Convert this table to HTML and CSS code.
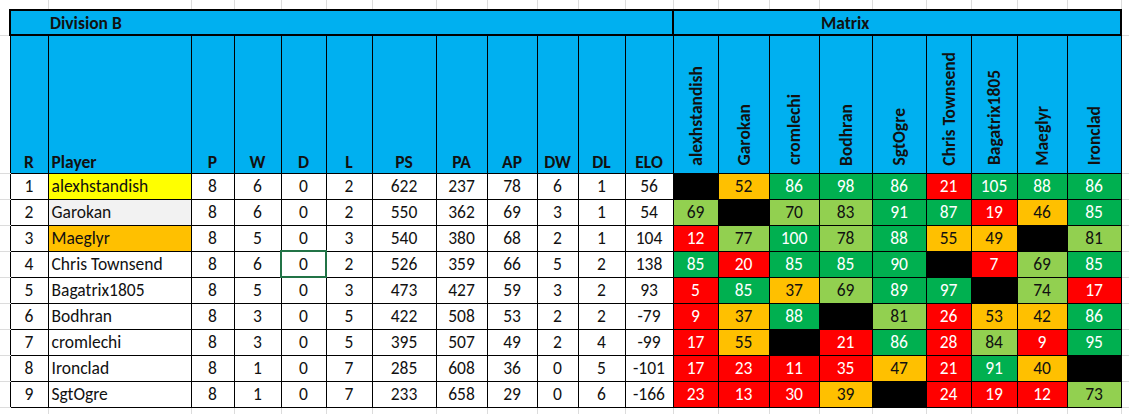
FILE: index.html
```html
<!DOCTYPE html>
<html lang="en">
<head>
<meta charset="utf-8">
<title>Division B</title>
<link rel="stylesheet" href="styles.css">
</head>
<body>
<table class="sheet">
  <colgroup>
    <col class="c-gap-l">
    <col class="c-r"><col class="c-player"><col class="c-p"><col class="c-w"><col class="c-d"><col class="c-l">
    <col class="c-ps"><col class="c-pa"><col class="c-ap"><col class="c-dw"><col class="c-dl"><col class="c-elo">
    <col class="c-m1"><col class="c-m2"><col class="c-m3"><col class="c-m4"><col class="c-m5"><col class="c-m6"><col class="c-m7"><col class="c-m8"><col class="c-m9">
    <col class="c-gap-r">
  </colgroup>
  <tbody>
    <tr class="gap-top">
      <td class="gl"></td>
      <td></td><td></td><td></td><td></td><td></td><td></td><td></td><td></td><td></td><td></td><td></td><td></td>
      <td></td><td></td><td></td><td></td><td></td><td></td><td></td><td></td><td></td>
      <td class="gr"></td>
    </tr>
    <tr class="title-row">
      <td class="gl"></td>
      <td class="title title-div" colspan="12">Division B</td>
      <td class="title title-matrix" colspan="9">Matrix</td>
      <td class="gr"></td>
    </tr>
    <tr class="head-row">
      <td class="gl"></td>
      <th>R</th><th class="left">Player</th><th>P</th><th>W</th><th>D</th><th>L</th>
      <th>PS</th><th>PA</th><th>AP</th><th>DW</th><th>DL</th><th>ELO</th>
      <th><span class="vert">alexhstandish</span></th>
      <th><span class="vert">Garokan</span></th>
      <th><span class="vert">cromlechi</span></th>
      <th><span class="vert">Bodhran</span></th>
      <th><span class="vert">SgtOgre</span></th>
      <th><span class="vert">Chris Townsend</span></th>
      <th><span class="vert">Bagatrix1805</span></th>
      <th><span class="vert">Maeglyr</span></th>
      <th><span class="vert">Ironclad</span></th>
      <td class="gr"></td>
    </tr>
    <tr class="row">
      <td class="gl"></td>
      <td>1</td><td class="left hl-y">alexhstandish</td><td>8</td><td>6</td><td>0</td><td>2</td>
      <td>622</td><td>237</td><td>78</td><td>6</td><td>1</td><td>56</td>
      <td class="x"></td><td class="o">52</td><td class="g">86</td><td class="g">98</td><td class="g">86</td><td class="r">21</td><td class="g">105</td><td class="g">88</td><td class="g">86</td>
      <td class="gr"></td>
    </tr>
    <tr class="row">
      <td class="gl"></td>
      <td>2</td><td class="left hl-gray">Garokan</td><td>8</td><td>6</td><td>0</td><td>2</td>
      <td>550</td><td>362</td><td>69</td><td>3</td><td>1</td><td>54</td>
      <td class="lg">69</td><td class="x"></td><td class="lg">70</td><td class="lg">83</td><td class="g">91</td><td class="g">87</td><td class="r">19</td><td class="o">46</td><td class="g">85</td>
      <td class="gr"></td>
    </tr>
    <tr class="row">
      <td class="gl"></td>
      <td>3</td><td class="left hl-o">Maeglyr</td><td>8</td><td>5</td><td>0</td><td>3</td>
      <td>540</td><td>380</td><td>68</td><td>2</td><td>1</td><td>104</td>
      <td class="r">12</td><td class="lg">77</td><td class="g">100</td><td class="lg">78</td><td class="g">88</td><td class="o">55</td><td class="o">49</td><td class="x"></td><td class="lg">81</td>
      <td class="gr"></td>
    </tr>
    <tr class="row">
      <td class="gl"></td>
      <td>4</td><td class="left">Chris Townsend</td><td>8</td><td>6</td><td class="selected">0</td><td>2</td>
      <td>526</td><td>359</td><td>66</td><td>5</td><td>2</td><td>138</td>
      <td class="g">85</td><td class="r">20</td><td class="g">85</td><td class="g">85</td><td class="g">90</td><td class="x"></td><td class="r">7</td><td class="lg">69</td><td class="g">85</td>
      <td class="gr"></td>
    </tr>
    <tr class="row">
      <td class="gl"></td>
      <td>5</td><td class="left">Bagatrix1805</td><td>8</td><td>5</td><td>0</td><td>3</td>
      <td>473</td><td>427</td><td>59</td><td>3</td><td>2</td><td>93</td>
      <td class="r">5</td><td class="g">85</td><td class="o">37</td><td class="lg">69</td><td class="g">89</td><td class="g">97</td><td class="x"></td><td class="lg">74</td><td class="r">17</td>
      <td class="gr"></td>
    </tr>
    <tr class="row">
      <td class="gl"></td>
      <td>6</td><td class="left">Bodhran</td><td>8</td><td>3</td><td>0</td><td>5</td>
      <td>422</td><td>508</td><td>53</td><td>2</td><td>2</td><td>-79</td>
      <td class="r">9</td><td class="o">37</td><td class="g">88</td><td class="x"></td><td class="lg">81</td><td class="r">26</td><td class="o">53</td><td class="o">42</td><td class="g">86</td>
      <td class="gr"></td>
    </tr>
    <tr class="row">
      <td class="gl"></td>
      <td>7</td><td class="left">cromlechi</td><td>8</td><td>3</td><td>0</td><td>5</td>
      <td>395</td><td>507</td><td>49</td><td>2</td><td>4</td><td>-99</td>
      <td class="r">17</td><td class="o">55</td><td class="x"></td><td class="r">21</td><td class="g">86</td><td class="r">28</td><td class="lg">84</td><td class="r">9</td><td class="g">95</td>
      <td class="gr"></td>
    </tr>
    <tr class="row">
      <td class="gl"></td>
      <td>8</td><td class="left">Ironclad</td><td>8</td><td>1</td><td>0</td><td>7</td>
      <td>285</td><td>608</td><td>36</td><td>0</td><td>5</td><td>-101</td>
      <td class="r">17</td><td class="r">23</td><td class="r">11</td><td class="r">35</td><td class="o">47</td><td class="r">21</td><td class="g">91</td><td class="o">40</td><td class="x"></td>
      <td class="gr"></td>
    </tr>
    <tr class="row">
      <td class="gl"></td>
      <td>9</td><td class="left">SgtOgre</td><td>8</td><td>1</td><td>0</td><td>7</td>
      <td>233</td><td>658</td><td>29</td><td>0</td><td>6</td><td>-166</td>
      <td class="r">23</td><td class="r">13</td><td class="r">30</td><td class="o">39</td><td class="x"></td><td class="r">24</td><td class="r">19</td><td class="r">12</td><td class="lg">73</td>
      <td class="gr"></td>
    </tr>
    <tr class="gap-bottom">
      <td class="gl"></td>
      <td></td><td></td><td></td><td></td><td></td><td></td><td></td><td></td><td></td><td></td><td></td><td></td>
      <td></td><td></td><td></td><td></td><td></td><td></td><td></td><td></td><td></td>
      <td class="gr"></td>
    </tr>
  </tbody>
</table>
</body>
</html>
```

FILE: styles.css
```css
html, body {
  margin: 0;
  padding: 0;
  background: #ffffff;
}

body {
  font-family: Carlito, Lato, "Liberation Sans", sans-serif;
  font-size: 17.5px;
  color: #000000;
  overflow: hidden;
}

.sheet {
  border-collapse: collapse;
  table-layout: fixed;
  width: 1129px;
}

.c-gap-l { width: 10px; }
.c-r { width: 38px; }
.c-player { width: 143px; }
.c-p { width: 43px; }
.c-w { width: 47px; }
.c-d { width: 45px; }
.c-l { width: 46px; }
.c-ps { width: 64px; }
.c-pa { width: 51px; }
.c-ap { width: 50px; }
.c-dw { width: 41px; }
.c-dl { width: 47px; }
.c-elo { width: 48px; }
.c-m1 { width: 45px; }
.c-m2 { width: 51px; }
.c-m3 { width: 50px; }
.c-m4 { width: 53px; }
.c-m5 { width: 54px; }
.c-m6 { width: 45px; }
.c-m7 { width: 46px; }
.c-m8 { width: 50px; }
.c-m9 { width: 54px; }
.c-gap-r { width: 8px; }

.sheet td,
.sheet th {
  padding: 0;
  border: 1px solid #000000;
  text-align: center;
  vertical-align: middle;
  white-space: nowrap;
  overflow: hidden;
  line-height: 20px;
}

/* spreadsheet gridlines outside the table */
.sheet .gl {
  border: none;
  border-bottom: 1px solid #dcdcdc;
}
.sheet .gr {
  border: none;
  border-bottom: 1px solid #dcdcdc;
}
.sheet .gap-top td,
.sheet .gap-bottom td {
  border: none;
  border-right: 1px solid #dcdcdc;
}
.sheet .gap-top .gl,
.sheet .gap-bottom .gl {
  border-right: none;
}
.sheet .gap-top .gr,
.sheet .gap-bottom .gr {
  border: none;
}

.gap-top { height: 10px; }
.gap-bottom { height: 7px; }

.title-row { height: 25px; }
.head-row { height: 138px; }
.row { height: 26px; }

.sheet .title {
  background: #00b0f0;
  border: 2px solid #000000;
  font-weight: bold;
  text-align: left;
  color: #111111;
  vertical-align: middle;
}
.sheet .title-div { padding-left: 39px; }
.sheet .title-matrix { padding-left: 147px; }

.sheet .head-row th {
  background: #00b0f0;
  font-weight: bold;
  color: #111111;
  vertical-align: bottom;
  padding-bottom: 1px;
}

.sheet .left {
  text-align: left;
  padding-left: 3px;
}

.vert {
  display: inline-block;
  writing-mode: vertical-rl;
  transform: rotate(180deg);
  line-height: 20px;
  padding-top: 2px;
}

.row td {
  color: #111111;
}

.sheet .hl-y { background: #ffff00; }
.sheet .hl-o { background: #ffc000; }
.sheet .hl-gray { background: #f2f2f2; }

.sheet .g { background: #00b050; color: #ffffff; }
.sheet .lg { background: #92d050; color: #111111; }
.sheet .o { background: #ffc000; color: #111111; }
.sheet .r { background: #ff0000; color: #ffffff; }
.sheet .x { background: #000000; }

.sheet .selected {
  outline: 2px solid #217346;
  outline-offset: -1px;
}
```
